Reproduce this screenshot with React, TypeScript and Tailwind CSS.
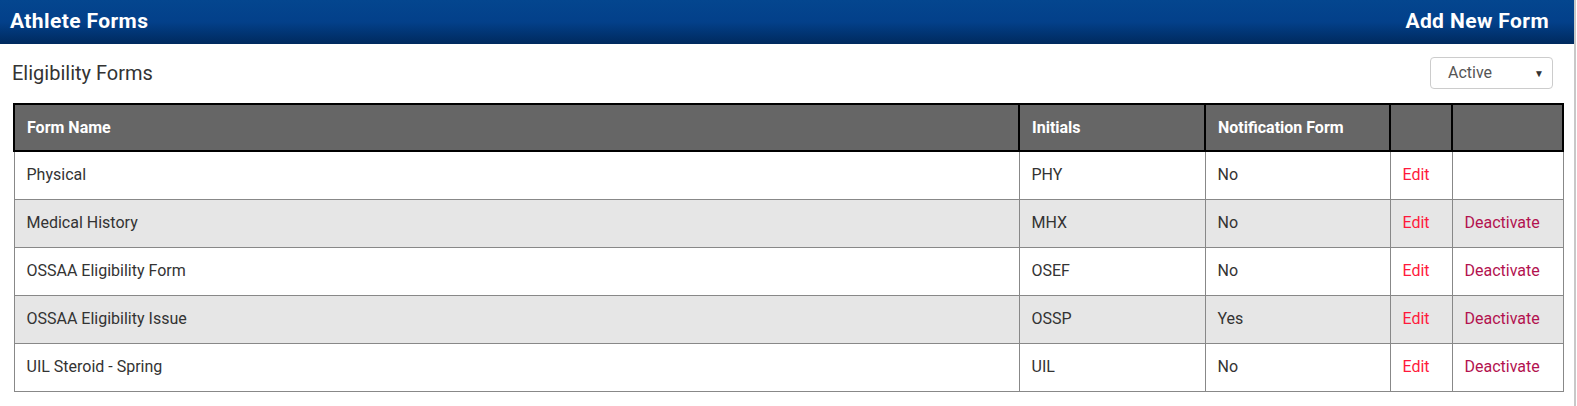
import React from 'react';

type Row = { name: string; initials: string; notify: string; deactivate: boolean };

const rows: Row[] = [
  { name: 'Physical', initials: 'PHY', notify: 'No', deactivate: false },
  { name: 'Medical History', initials: 'MHX', notify: 'No', deactivate: true },
  { name: 'OSSAA Eligibility Form', initials: 'OSEF', notify: 'No', deactivate: true },
  { name: 'OSSAA Eligibility Issue', initials: 'OSSP', notify: 'Yes', deactivate: true },
  { name: 'UIL Steroid - Spring', initials: 'UIL', notify: 'No', deactivate: true },
];

const App: React.FC = () => {
  return (
    <div className="h-[406px] overflow-hidden bg-white font-['Roboto',sans-serif]">
      <div className="mr-px h-full border-r-2 border-[#c8c8c8]">
        <header className="flex h-[44px] items-center justify-between bg-gradient-to-b from-[#04468f] via-[#03408a] to-[#002a5e] pl-[10px] pr-[25px]">
          <h1 className="text-[21px] font-bold tracking-[0.4px] text-white">Athlete Forms</h1>
          <a href="#" className="text-[21px] font-bold tracking-[0.4px] text-white">
            Add New Form
          </a>
        </header>

        <section className="pl-[13px] pt-[13px]">
          <div className="flex items-start justify-between">
            <h2 className="-ml-px pt-[1px] text-[20px] text-[#333]">Eligibility Forms</h2>
            <div className="mr-[21px] flex h-[32px] w-[123px] items-center justify-between rounded-[4px] border border-[#ccc] pl-[17px] pr-[8px] text-[16px] text-[#555]">
              <span>Active</span>
              <span className="text-[10px] text-[#333]">▼</span>
            </div>
          </div>

          <table className="mt-[14px] w-[1549px] table-fixed border-collapse text-[16px] text-[#333]">
            <colgroup>
              <col className="w-[1005px]" />
              <col className="w-[186px]" />
              <col className="w-[185px]" />
              <col className="w-[62px]" />
              <col className="w-[111px]" />
            </colgroup>
            <thead>
              <tr className="h-[47px] bg-[#666] text-left font-bold text-white">
                <th className="border-2 border-black px-[12px] text-[16px] font-bold">Form Name</th>
                <th className="border-2 border-black px-[12px] text-[16px] font-bold">Initials</th>
                <th className="border-2 border-black px-[12px] text-[16px] font-bold">Notification Form</th>
                <th className="border-2 border-black"></th>
                <th className="border-2 border-black"></th>
              </tr>
            </thead>
            <tbody>
              {rows.map((r, i) => (
                <tr key={r.name} className={`h-[48px] ${i % 2 === 1 ? 'bg-[#e6e6e6]' : 'bg-white'}`}>
                  <td className="border border-[#888] px-[12px]">{r.name}</td>
                  <td className="border border-[#888] px-[12px]">{r.initials}</td>
                  <td className="border border-[#888] px-[12px]">{r.notify}</td>
                  <td className="border border-[#888] px-[12px]">
                    <a href="#" className="text-[#ff1a3c]">Edit</a>
                  </td>
                  <td className="border border-[#888] px-[12px]">
                    {r.deactivate && (
                      <a href="#" className="text-[#b3124f]">Deactivate</a>
                    )}
                  </td>
                </tr>
              ))}
            </tbody>
          </table>
        </section>
      </div>
    </div>
  );
};

export default App;
